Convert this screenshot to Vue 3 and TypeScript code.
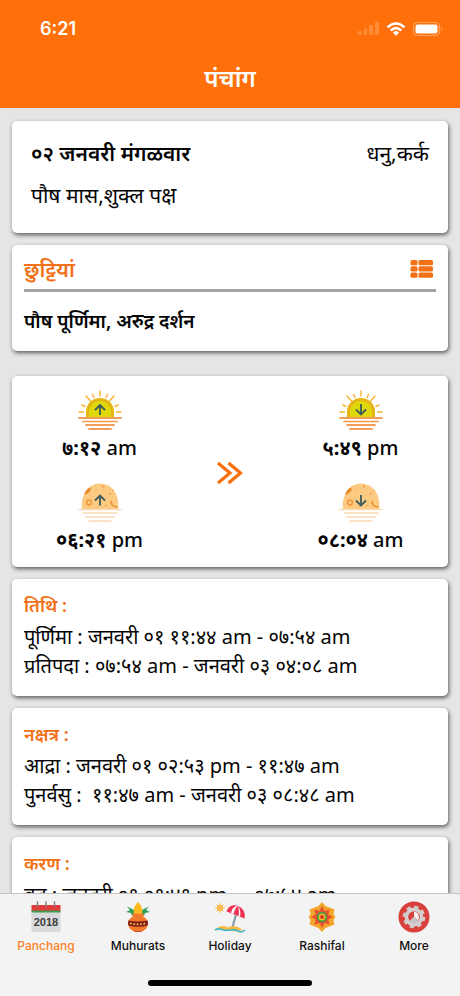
<script setup lang="ts">
import { ref } from 'vue'

interface TimeEntry {
  id: string
  body: 'sun' | 'moon'
  direction: 'up' | 'down'
  digits: string
  period: string
}

interface DetailSection {
  title: string
  lines: string[]
}

interface Tab {
  id: string
  label: string
}

const rising: TimeEntry[] = [
  { id: 'sunrise', body: 'sun', direction: 'up', digits: '७:१२', period: 'am' },
  { id: 'moonrise', body: 'moon', direction: 'up', digits: '०६:२१', period: 'pm' },
]

const setting: TimeEntry[] = [
  { id: 'sunset', body: 'sun', direction: 'down', digits: '५:४९', period: 'pm' },
  { id: 'moonset', body: 'moon', direction: 'down', digits: '०८:०४', period: 'am' },
]

const columns = [
  { id: 'rising', entries: rising },
  { id: 'setting', entries: setting },
]

const sections: DetailSection[] = [
  {
    title: 'तिथि :',
    lines: ['पूर्णिमा : जनवरी ०१ ११:४४ am - ०७:५४ am', 'प्रतिपदा : ०७:५४ am - जनवरी ०३ ०४:०८ am'],
  },
  {
    title: 'नक्षत्र :',
    lines: ['आद्रा : जनवरी ०१ ०२:५३ pm - ११:४७ am', 'पुनर्वसु :  ११:४७ am - जनवरी ०३ ०८:४८ am'],
  },
  {
    title: 'करण :',
    lines: ['बव : जनवरी ०१ ०१:४१ pm  -  ०७:५४ am'],
  },
]

const tabs: Tab[] = [
  { id: 'panchang', label: 'Panchang' },
  { id: 'muhurats', label: 'Muhurats' },
  { id: 'holiday', label: 'Holiday' },
  { id: 'rashifal', label: 'Rashifal' },
  { id: 'more', label: 'More' },
]

const activeTab = ref('panchang')
</script>

<template>
  <div class="app">
    <header class="top">
      <div class="status">
        <span class="clock">6:21</span>
        <div class="status-icons">
          <svg class="signal" viewBox="0 0 22 14" width="22" height="14">
            <rect x="0" y="9" width="4" height="4" rx="1" />
            <rect x="6" y="6" width="3" height="7" rx="1" />
            <rect x="11" y="3" width="4" height="10" rx="1" />
            <rect x="17" y="0" width="4" height="13" rx="1" />
          </svg>
          <svg viewBox="0 0 20 14" width="20" height="14">
            <g fill="none" stroke="#fff" stroke-width="2.6">
              <path d="M1.5 5.4 Q10 -2.4 18.5 5.4" />
              <path d="M4.8 8.5 Q10 3.8 15.2 8.5" />
            </g>
            <path d="M6.8 10.6 Q10 7.6 13.2 10.6 L10 13.8 Z" fill="#fff" />
          </svg>
          <svg viewBox="0 0 32 16" width="32" height="16">
            <rect x="1.5" y="1.5" width="26" height="13" rx="4" fill="none" stroke="#ffa35c" stroke-width="1.2" />
            <rect x="3.5" y="3.5" width="22" height="9" rx="2" fill="#fff" />
            <path d="M29.5 5.5 Q31.5 8 29.5 10.5 Z" fill="#ffa35c" />
          </svg>
        </div>
      </div>
      <h1 class="title">पंचांग</h1>
    </header>

    <main class="content">
      <section class="card today">
        <div class="today-row">
          <h2 class="date">०२ जनवरी मंगळवार</h2>
          <span class="plain">धनु,कर्क</span>
        </div>
        <p class="plain">पौष मास,शुक्ल पक्ष</p>
      </section>

      <section class="card holidays">
        <div class="holidays-head">
          <h2 class="holidays-title">छुट्टियां</h2>
          <button class="list-button" type="button" aria-label="छुट्टियां">
            <svg viewBox="0 0 24 20" width="24" height="20" fill="#f37116">
              <rect x="0.5" y="1" width="7" height="5.2" rx="1.5" />
              <rect x="8.5" y="1" width="14.5" height="5.2" rx="1.5" />
              <rect x="0.5" y="7.3" width="7" height="5.2" rx="1.5" />
              <rect x="8.5" y="7.3" width="14.5" height="5.2" rx="1.5" />
              <rect x="0.5" y="13.6" width="7" height="5.2" rx="1.5" />
              <rect x="8.5" y="13.6" width="14.5" height="5.2" rx="1.5" />
            </svg>
          </button>
        </div>
        <p class="holidays-text">पौष पूर्णिमा, अरुद्र दर्शन</p>
      </section>

      <section class="card times">
        <div v-for="column in columns" :key="column.id" class="time-column" :class="column.id">
          <div v-for="entry in column.entries" :key="entry.id" class="time">
            <svg v-if="entry.body === 'sun'" viewBox="0 0 44 40" width="44" height="40">
              <g stroke="#f5b52c" stroke-width="1.4" stroke-linecap="round">
                <path d="M22 1V6M8 6L12.5 11M36 6L31.5 11M14.5 4.5L16 7.5M29.5 4.5L28 7.5M4 15L7 16.5M40 15L37 16.5M1 22H5.5M43 22H38.5" />
              </g>
              <path d="M8 27V21.5A14 13.5 0 0 1 36 21.5V27Z" fill="#e6b414" />
              <path d="M11 27V22A11 11 0 0 1 33 22V27Z" fill="#dfd80d" />
              <g stroke="#ee7d25" stroke-width="1.7" stroke-linecap="round">
                <path d="M1 28H43" />
                <path d="M5 31.5H39" stroke="#f39a40" />
                <path d="M8 35H36M11 39H33" />
              </g>
              <path v-if="entry.direction === 'up'" d="M22 25V15M17 20L22 15L27 20" class="arrow" />
              <path v-else d="M22 14V24.5M17 19.5L22 24.5L27 19.5" class="arrow" />
            </svg>
            <svg v-else viewBox="0 0 44 40" width="44" height="40">
              <path d="M4 27C2.5 13 10 1.5 22 1.5S42 13 40 27Z" fill="#fdca82" />
              <path d="M6 13Q8 6 12.5 5.5Q14 10 6 13Z" fill="#e78b2b" />
              <circle cx="11" cy="20.5" r="2.4" fill="none" stroke="#ee963b" stroke-width="1.5" />
              <path d="M33 19Q33 25 40 25" fill="none" stroke="#e99639" stroke-width="1.6" />
              <g fill="#efa14c">
                <circle cx="25" cy="4.5" r="1.2" />
                <circle cx="18" cy="8" r="0.8" />
                <circle cx="32" cy="12" r="1" />
                <circle cx="35" cy="8.5" r="0.8" />
                <circle cx="20" cy="24.5" r="0.7" />
                <circle cx="28" cy="23.5" r="0.9" />
              </g>
              <g stroke="#fbd9b2" stroke-width="1.3" stroke-linecap="round">
                <path d="M1 27.5H43M5 31H39M8 35H36M11 39H33" />
              </g>
              <path v-if="entry.direction === 'up'" d="M22 23.5V13.5M17 18.5L22 13.5L27 18.5" class="arrow" />
              <path v-else d="M22 13V23.5M17 18.5L22 23.5L27 18.5" class="arrow" />
            </svg>
            <p class="time-text"><b>{{ entry.digits }}</b> {{ entry.period }}</p>
          </div>
        </div>
        <svg class="chevrons" viewBox="0 0 28 24" width="28" height="24">
          <path d="M2 2L14 12L2 22M12.5 2L24.5 12L12.5 22" fill="none" stroke="#f8700c" stroke-width="3.2" />
        </svg>
      </section>

      <section v-for="section in sections" :key="section.title" class="card detail">
        <h2 class="detail-title">{{ section.title }}</h2>
        <p v-for="line in section.lines" :key="line" class="detail-line">{{ line }}</p>
      </section>
    </main>

    <nav class="tabs">
      <button
        v-for="tab in tabs"
        :key="tab.id"
        type="button"
        class="tab"
        :class="{ active: tab.id === activeTab }"
        @click="activeTab = tab.id"
      >
        <svg v-if="tab.id === 'panchang'" viewBox="0 0 32 32" width="32" height="32">
          <rect x="1.5" y="10" width="29" height="21" fill="#d9dadb" />
          <rect x="1.5" y="4" width="29" height="6" fill="#e23b3c" />
          <rect x="1.5" y="9.5" width="29" height="2" fill="#3f9c4b" />
          <path d="M7.5 1V6M16 1V6M24.5 1V6" stroke="#8d7f7f" stroke-width="1.5" stroke-linecap="round" />
          <text x="16" y="25" text-anchor="middle" class="year">2018</text>
        </svg>
        <svg v-else-if="tab.id === 'muhurats'" viewBox="0 0 32 32" width="32" height="32">
          <path d="M16 11L5 5.5L8 9L4 11L9 12L10 15H22L23 12L28 11L24 9L27 5.5Z" fill="#2f9d5b" />
          <path d="M16 1C20 5 21 9 20 13H12C11 9 12 5 16 1Z" fill="#fdbb1f" />
          <rect x="10" y="12.5" width="12" height="3" rx="1.5" fill="#f07a2b" />
          <path d="M12 15H20C24 17 26 19 26 22C26 28 21 31 16 31S6 28 6 22C6 19 8 17 12 15Z" fill="#f2782a" />
          <path d="M6.5 19.5Q16 21.5 25.5 19.5Q26.5 22 25.5 24.5Q16 27 6.5 24.5Q5.5 22 6.5 19.5Z" fill="#7d2019" />
          <path d="M8 22.2Q16 24.5 24 22.2" fill="none" stroke="#f9c04d" stroke-width="1.7" stroke-dasharray="1.7 1.7" />
          <path d="M12 29.7Q16 31 20 29.7L19 31H13Z" fill="#b83c25" />
        </svg>
        <svg v-else-if="tab.id === 'holiday'" viewBox="0 0 32 32" width="32" height="32">
          <circle cx="6" cy="7" r="3.2" fill="#f9b233" />
          <path d="M6 2V12M1 7H11M2.5 3.5L9.5 10.5M9.5 3.5L2.5 10.5" stroke="#f9c25c" stroke-width="1" />
          <path d="M22.5 12L18.5 26" stroke="#7f97a8" stroke-width="2" />
          <path d="M12.5 10.5C14.5 4.5 20 3 25 5.5C30 8 31.5 13 30.5 17.5Z" fill="#ec3555" />
          <path d="M17 12C18 7.5 20.5 5 23.5 5C26 7.5 27 11 26 15.5Z" fill="#fff" />
          <path d="M19.5 13C20.5 9 22 6.5 23.5 5C25 8 25.5 11 24.5 15Z" fill="#ec3555" />
          <path d="M2 28Q7 23 14 26.5Q21 23 29 29L21 30.5Q13 28 6 29Z" fill="#f8b83b" />
          <path d="M1 29Q4 27 8 28.5T16 29T24 30T31 29" fill="none" stroke="#40b7c7" stroke-width="1.6" />
        </svg>
        <svg v-else-if="tab.id === 'rashifal'" viewBox="0 0 32 32" width="32" height="32">
          <path d="M16 1L19.5 5L28.5 8.5L27.5 13L29.5 16L27.5 19L28.5 23.5L19.5 27L16 31L12.5 27L3.5 23.5L4.5 19L2.5 16L4.5 13L3.5 8.5L12.5 5Z" fill="#f3a52c" />
          <path d="M16 5L18.5 10L23.5 8.5L22.3 13.5L27 16L22.3 18.5L23.5 23.5L18.5 22L16 27L13.5 22L8.5 23.5L9.7 18.5L5 16L9.7 13.5L8.5 8.5L13.5 10Z" fill="#e9502f" />
          <circle cx="16" cy="16" r="5.2" fill="#3f9b3e" />
          <circle cx="16" cy="16" r="3.5" fill="#f6b832" />
          <circle cx="16" cy="16" r="2" fill="#d83a2a" />
        </svg>
        <svg v-else viewBox="0 0 32 32" width="32" height="32">
          <circle cx="16" cy="16" r="15.5" fill="#d9403b" />
          <circle cx="16" cy="16" r="10" fill="none" stroke="#d2cfce" stroke-width="2.6" stroke-dasharray="4.2 3.654" />
          <circle cx="16" cy="16" r="7.6" fill="#d9403b" stroke="#d2cfce" stroke-width="3.6" />
          <path d="M16 15.5V10.5A5.8 5.8 0 0 1 20 19.5Z" fill="#f5f2f1" />
          <path d="M16 15.5L20.5 20A6 6 0 0 1 11.5 20Z" fill="#c9c5c4" />
        </svg>
        <span>{{ tab.label }}</span>
      </button>
      <div class="home-bar"></div>
    </nav>
  </div>
</template>

<style>
body {
  margin: 0;
  background: #e5e5e5;
}
</style>

<style scoped>
.app {
  display: flex;
  flex-direction: column;
  height: 100vh;
  overflow: hidden;
  color: #050505;
  font-family: "Noto Sans", "Noto Sans Devanagari", sans-serif;
}

h1,
h2,
p {
  margin: 0;
}

button {
  border: 0;
  padding: 0;
  background: none;
  cursor: pointer;
}

.top {
  flex: none;
  display: flex;
  flex-direction: column;
  height: 108px;
  background: #ff700a;
  color: #fff;
}

.status {
  display: flex;
  align-items: center;
  justify-content: space-between;
  padding: 18px 16px 0 40px;
}

.clock {
  font: 600 18px/22px "Inter", sans-serif;
}

.status-icons {
  display: flex;
  align-items: center;
  gap: 6px;
}

.signal {
  fill: #ff8c38;
}

.title {
  margin-top: 22px;
  text-align: center;
  font-size: 24px;
  font-weight: 600;
  line-height: 32px;
}

.content {
  flex: 1;
  min-height: 0;
  overflow: auto;
  scrollbar-width: none;
  display: flex;
  flex-direction: column;
  gap: 12px;
  padding: 13px 12px 0;
}

.card {
  flex: none;
  box-sizing: border-box;
  border-radius: 5px;
  background: #fff;
  box-shadow: 1px 2px 4px rgba(0, 0, 0, 0.6);
}

.today {
  display: flex;
  flex-direction: column;
  gap: 10px;
  padding: 16px 19px 22px;
}

.today-row {
  display: flex;
  justify-content: space-between;
}

.date {
  font-size: 21px;
  font-weight: 600;
  line-height: 32px;
}

.plain {
  font-size: 21px;
  line-height: 32px;
}

.holidays {
  padding: 8px 12px 14px;
}

.holidays-head {
  display: flex;
  align-items: center;
  justify-content: space-between;
  padding: 0 2px 4px 0;
  border-bottom: 3px solid #a3a3a3;
}

.holidays-title {
  color: #f37116;
  font-size: 21px;
  font-weight: 600;
  line-height: 32px;
}

.list-button {
  display: flex;
}

.holidays-text {
  padding-top: 13px;
  font-size: 19px;
  font-weight: 600;
  line-height: 32px;
}

.times {
  display: grid;
  grid-template-columns: 1fr 86px 1fr;
  align-items: center;
  margin-top: 13px;
  padding: 14px 0 11px;
}

.time-column {
  grid-row: 1;
  display: flex;
  flex-direction: column;
  gap: 18px;
}

.setting {
  grid-column: 3;
}

.time {
  display: flex;
  flex-direction: column;
  align-items: center;
  gap: 2px;
}

.time-text {
  font-size: 20px;
  font-weight: 500;
  line-height: 32px;
}

.arrow {
  fill: none;
  stroke: #3d5a5c;
  stroke-width: 1.8px;
}

.chevrons {
  grid-row: 1;
  grid-column: 2;
  justify-self: center;
}

.detail {
  padding: 9px 12px 16px;
}

.detail-title {
  color: #f37116;
  font-size: 18px;
  font-weight: 600;
  line-height: 34px;
}

.detail-line {
  font-size: 20px;
  line-height: 29px;
  white-space: pre-wrap;
}

.tabs {
  flex: none;
  display: grid;
  grid-template-columns: repeat(5, 1fr);
  align-content: start;
  box-sizing: border-box;
  height: 103px;
  padding-top: 7px;
  border-top: 1px solid #c4c4c4;
  background: #f3f3f3;
}

.tab {
  display: flex;
  flex-direction: column;
  align-items: center;
  gap: 4px;
  color: #111;
  font: 500 12px/18px "Inter", sans-serif;
}

.tab.active {
  color: #fa8128;
}

.year {
  fill: #3d3d3d;
  font: 700 11px "Liberation Sans", sans-serif;
}

.home-bar {
  grid-column: 1 / -1;
  justify-self: center;
  width: 164px;
  height: 6px;
  margin-top: 25px;
  border-radius: 3px;
  background: #000;
}
</style>
